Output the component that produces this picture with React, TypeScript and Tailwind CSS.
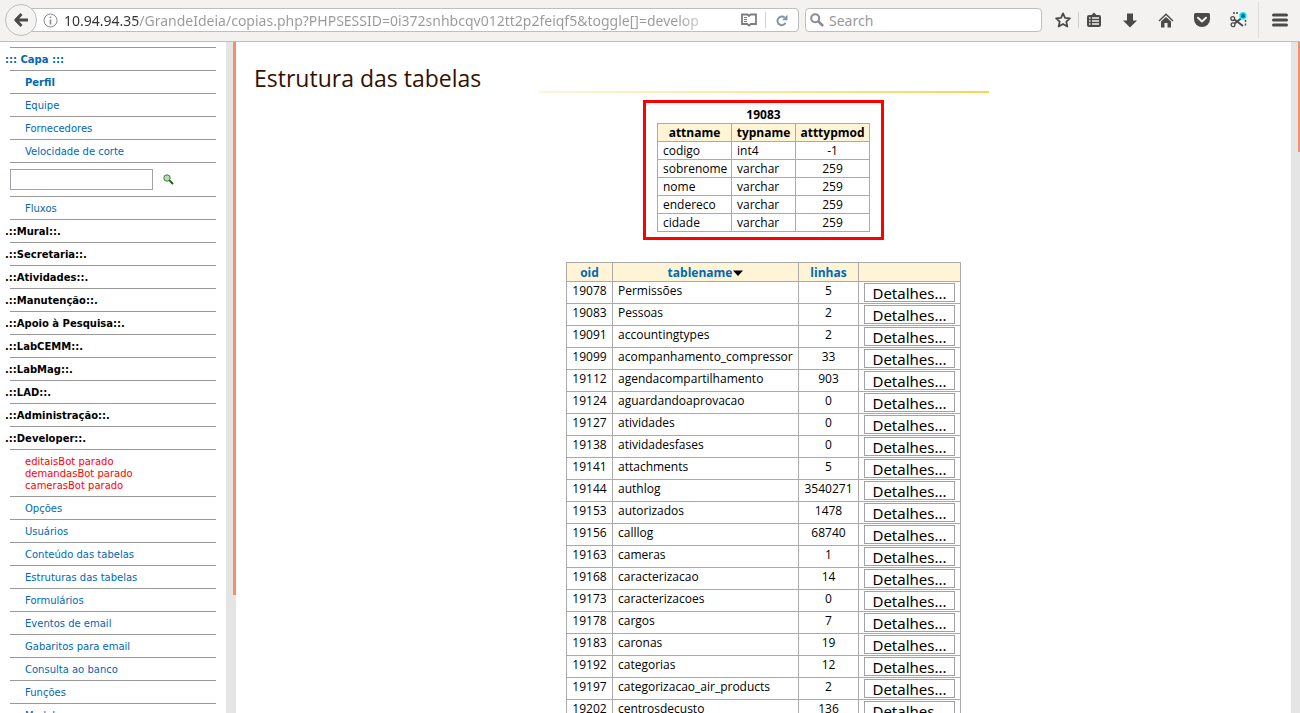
import React from "react";

const attributes = [
  ["codigo", "int4", "-1"],
  ["sobrenome", "varchar", "259"],
  ["nome", "varchar", "259"],
  ["endereco", "varchar", "259"],
  ["cidade", "varchar", "259"],
];

const tables: [string, string, string][] = [
  ["19078", "Permissões", "5"],
  ["19083", "Pessoas", "2"],
  ["19091", "accountingtypes", "2"],
  ["19099", "acompanhamento_compressor", "33"],
  ["19112", "agendacompartilhamento", "903"],
  ["19124", "aguardandoaprovacao", "0"],
  ["19127", "atividades", "0"],
  ["19138", "atividadesfases", "0"],
  ["19141", "attachments", "5"],
  ["19144", "authlog", "3540271"],
  ["19153", "autorizados", "1478"],
  ["19156", "calllog", "68740"],
  ["19163", "cameras", "1"],
  ["19168", "caracterizacao", "14"],
  ["19173", "caracterizacoes", "0"],
  ["19178", "cargos", "7"],
  ["19183", "caronas", "19"],
  ["19192", "categorias", "12"],
  ["19197", "categorizacao_air_products", "2"],
  ["19202", "centrosdecusto", "136"],
];

const sections = ["Mural", "Secretaria", "Atividades", "Manutenção", "Apoio à Pesquisa", "LabCEMM", "LabMag", "LAD", "Administração", "Developer"];
const developerLinks = ["Opções", "Usuários", "Conteúdo das tabelas", "Estruturas das tabelas", "Formulários", "Eventos de email", "Gabaritos para email", "Consulta ao banco", "Funções", "Modelos"];

function ToolbarButton({ label, children }: { label: string; children: React.ReactNode }) {
  return (
    <button type="button" aria-label={label} className="flex size-5 items-center justify-center">
      {children}
    </button>
  );
}

function BrowserBar() {
  return (
    <header className="flex h-[42px] shrink-0 items-center border-b border-[#bebebc] bg-[#f3f2f0] pb-px pl-[5px] pr-2.5 font-['Noto_Sans',sans-serif] text-[14px]">
      <button type="button" aria-label="Voltar" className="relative z-10 flex size-8 shrink-0 items-center justify-center rounded-full border border-[#bebebc] bg-[#f5f4f2]">
        <svg width="16" height="16" viewBox="0 0 16 16" fill="none" stroke="#4a4a4a" strokeWidth="3">
          <path d="M8.5 2L2.8 8L8.5 14M3 8H15" strokeLinejoin="round" />
        </svg>
      </button>
      <div className="-ml-2 flex h-6 min-w-0 flex-1 items-center rounded-r-sm border border-[#bebebc] bg-white pl-[13px]">
        <svg width="15" height="15" viewBox="0 0 15 15" fill="none" stroke="#8c8c8c" className="shrink-0">
          <circle cx="7.5" cy="7.5" r="6.5" />
          <path d="M7.5 6.5V11.5M7.5 3.5V5" strokeWidth="1.6" />
        </svg>
        <input
          aria-label="Endereço"
          defaultValue="10.94.94.35/GrandeIdeia/copias.php?PHPSESSID=0i372snhbcqv012tt2p2feiqf5&toggle[]=develop"
          className="ml-1.5 mr-[18px] h-5 min-w-0 flex-1 bg-[linear-gradient(to_right,#333_0_75px,#999_75px_calc(100%-44px),transparent)] bg-clip-text text-transparent outline-none"
        />
        <ToolbarButton label="Modo de leitura">
          <svg width="16" height="14" viewBox="0 0 16 14" fill="none" stroke="#7d7d7d">
            <path d="M1 1.5H6.5L8 3L9.5 1.5H15V11H9.8L8 12.6L6.2 11H1Z" strokeWidth="1.8" />
            <path d="M3 4.5H6M3 6.5H6M3 8.5H6" />
          </svg>
        </ToolbarButton>
        <span className="ml-1.5 mr-1.5 h-4 w-px bg-[#cfcfcf]" />
        <ToolbarButton label="Recarregar">
          <svg width="12" height="13" viewBox="0 0 12 13">
            <path d="M9.5 9A4.3 4.3 0 1 1 8.6 3.6" fill="none" stroke="#8494a6" strokeWidth="2" />
            <path d="M11.5 0.8V6.2H6Z" fill="#8494a6" />
          </svg>
        </ToolbarButton>
        <span className="w-1.5" />
      </div>
      <div className="ml-1.5 flex h-6 w-[237px] shrink items-center rounded-sm border border-[#bebebc] bg-white pl-1">
        <svg width="14" height="14" viewBox="0 0 14 14" fill="none" stroke="#8c8c8c">
          <circle cx="5.2" cy="5.2" r="4" strokeWidth="2" />
          <path d="M8.2 8.2L13 13" strokeWidth="2.6" />
        </svg>
        <input aria-label="Search" placeholder="Search" className="ml-[5px] h-5 min-w-0 flex-1 outline-none placeholder:text-[#999]" />
      </div>
      <div className="ml-[11px] flex shrink-0 items-center">
        <ToolbarButton label="Favoritar">
          <svg width="16" height="16" viewBox="0 0 16 16" fill="none" stroke="#4a4a4a" strokeWidth="1.8" strokeLinejoin="round">
            <path d="M8 1.4L10 5.8L14.9 6.3L11.3 9.6L12.3 14.5L8 12L3.7 14.5L4.7 9.6L1.1 6.3L6 5.8Z" />
          </svg>
        </ToolbarButton>
        <span className="mx-[5px] h-4 w-px bg-[#cfcfcf]" />
        <div className="flex items-center gap-4">
          <ToolbarButton label="Biblioteca">
            <svg width="14" height="16" viewBox="0 0 14 16">
              <path d="M2 3H4.5L7 0.5L9.5 3H12Q14 3 14 5V13Q14 15 12 15H2Q0 15 0 13V5Q0 3 2 3Z" fill="#4a4a4a" />
              <path d="M2 6H3.5M5 6H12M2 9H3.5M5 9H12M2 12H3.5M5 12H12" stroke="#f3f2f0" strokeWidth="1.6" />
            </svg>
          </ToolbarButton>
          <ToolbarButton label="Downloads">
            <svg width="14" height="15" viewBox="0 0 14 15"><path d="M4 0.5H10V7.5H14L7 14.5L0 7.5H4Z" fill="#4a4a4a" /></svg>
          </ToolbarButton>
          <ToolbarButton label="Início">
            <svg width="16" height="15" viewBox="0 0 16 15">
              <path d="M1 8L8 1.3L15 8" fill="none" stroke="#4a4a4a" strokeWidth="1.4" />
              <path d="M3 8.5L8 3.9L13 8.5V14.5H9.5V10H6.5V14.5H3Z" fill="#4a4a4a" />
            </svg>
          </ToolbarButton>
          <ToolbarButton label="Pocket">
            <svg width="16" height="14" viewBox="0 0 16 14">
              <path d="M1.5 0H14.5Q16 0 16 1.5V6A8 8 0 0 1 0 6V1.5Q0 0 1.5 0Z" fill="#4a4a4a" />
              <path d="M4 4.8L8 8.5L12 4.8" fill="none" stroke="#f3f2f0" strokeWidth="2" strokeLinecap="round" strokeLinejoin="round" />
            </svg>
          </ToolbarButton>
          <ToolbarButton label="Recortar">
            <svg width="17" height="16" viewBox="0 0 17 16" fill="none" stroke="#4a4a4a">
              <path d="M3 1H9" strokeWidth="1.4" strokeDasharray="2 1" />
              <path d="M15.5 8V15" strokeWidth="1.4" strokeDasharray="2 1.5" />
              <circle cx="2.7" cy="6.6" r="1.9" strokeWidth="1.3" />
              <circle cx="3" cy="12.8" r="1.9" strokeWidth="1.3" />
              <path d="M4.4 7.6L13 14M4.6 11.6L11 6.6" strokeWidth="1.9" />
              <circle cx="13" cy="3.8" r="3.7" fill="#00f0ff" stroke="none" />
              <path d="M13 1.6V6M11.1 2.7L14.9 4.9M14.9 2.7L11.1 4.9" stroke="#07556b" strokeWidth="1.2" />
            </svg>
          </ToolbarButton>
        </div>
        <span className="ml-[10px] mr-[11px] h-9 w-px bg-[#dcdbd9]" />
        <ToolbarButton label="Menu">
          <svg width="16" height="14" viewBox="0 0 16 14" stroke="#4a4a4a" strokeWidth="3" strokeLinecap="round">
            <path d="M1.5 2H14.5M1.5 7H14.5M1.5 12H14.5" />
          </svg>
        </ToolbarButton>
      </div>
    </header>
  );
}

function SideLink({ children, bold }: { children: React.ReactNode; bold?: boolean }) {
  return (
    <li className="border-t border-[#999] pb-1 pl-[15px] pt-[6px]">
      <a href="#" className={bold ? "block font-bold text-[#0068b5]" : "block text-[#0068b5]"}>{children}</a>
    </li>
  );
}

function Sidebar() {
  return (
    <nav className="w-[226px] shrink-0 overflow-hidden pl-2.5 pr-2.5 pt-[5px] font-['DejaVu_Sans',sans-serif] text-[10px] leading-3">
      <ul>
        <li className="border-t border-[#999] pb-1 pt-[6px]">
          <a href="#" className="-ml-[5px] block font-bold text-[#0068b5]">::: Capa :::</a>
        </li>
        <SideLink bold>Perfil</SideLink>
        <SideLink>Equipe</SideLink>
        <SideLink>Fornecedores</SideLink>
        <SideLink>Velocidade de corte</SideLink>
        <li className="flex items-center border-t border-[#999] pb-[5px] pt-[6px]">
          <input aria-label="Pesquisar" className="h-[21px] w-[143px] border border-[#a0a0b0] px-1 outline-none" />
          <button type="button" aria-label="Buscar" className="ml-2.5">
            <svg width="11" height="11" viewBox="0 0 11 11">
              <circle cx="4" cy="4" r="3.2" fill="#b9dcb5" stroke="#3f7d3c" />
              <path d="M6.4 6.4L10 10" stroke="#1c5e1a" strokeWidth="2" />
            </svg>
          </button>
        </li>
        <li className="mt-px border-t border-[#999] pb-1 pl-[15px] pt-[6px]">
          <a href="#" className="block text-[#0068b5]">Fluxos</a>
        </li>
        {sections.map((name) => (
          <li key={name} className="border-t border-[#999] pb-1 pt-[6px]">
            <a href="#" className="-ml-[5px] block font-bold text-black">.::{name}::.</a>
          </li>
        ))}
        <li className="border-t border-[#999] pb-1 pl-[15px] pt-[6px] text-[#f00]">
          <p>editaisBot parado</p>
          <p>demandasBot parado</p>
          <p>camerasBot parado</p>
        </li>
        {developerLinks.map((name) => (
          <SideLink key={name}>{name}</SideLink>
        ))}
      </ul>
    </nav>
  );
}

function DetailsPanel() {
  return (
    <section className="mt-[7px] border-[3px] border-[#f00] px-[11px] pb-[5px] pt-1">
      <table className="table-fixed border-collapse text-[12px] leading-4">
        <caption className="font-bold">19083</caption>
        <colgroup>
          <col className="w-[74px]" />
          <col className="w-16" />
          <col className="w-[74px]" />
        </colgroup>
        <thead>
          <tr className="h-[18px] bg-[#fff5d6]">
            <th className="border border-[#aaa] p-0">attname</th>
            <th className="border border-[#aaa] p-0">typname</th>
            <th className="border border-[#aaa] p-0">atttypmod</th>
          </tr>
        </thead>
        <tbody>
          {attributes.map(([name, type, mod]) => (
            <tr key={name} className="h-[18px]">
              <td className="border border-[#aaa] py-0 pl-[5px]">{name}</td>
              <td className="border border-[#aaa] py-0 pl-[5px]">{type}</td>
              <td className="border border-[#aaa] p-0 text-center">{mod}</td>
            </tr>
          ))}
        </tbody>
      </table>
    </section>
  );
}

function TableList() {
  return (
    <table className="mt-[22px] table-fixed border-collapse text-[12px] leading-4">
      <colgroup>
        <col className="w-[46px]" />
        <col className="w-[186px]" />
        <col className="w-[60px]" />
        <col className="w-[102px]" />
      </colgroup>
      <thead>
        <tr className="h-[19px] bg-[#fff5d6] text-[#0068b5]">
          <th className="border border-[#aaa] px-0 pb-0 pt-0.5"><a href="#">oid</a></th>
          <th className="border border-[#aaa] px-0 pb-0 pt-0.5">
            <a href="#" className="flex items-center justify-center">
              tablename
              <svg width="10" height="6" viewBox="0 0 10 6" className="ml-px"><path d="M0 0.5H10L5 6Z" fill="#000" /></svg>
            </a>
          </th>
          <th className="border border-[#aaa] px-0 pb-0 pt-0.5"><a href="#">linhas</a></th>
          <th className="border border-[#aaa] p-0" />
        </tr>
      </thead>
      <tbody>
        {tables.map(([oid, name, rows]) => (
          <tr key={oid} className="h-[22px] align-top">
            <td className="border border-[#aaa] px-0 pb-0 pt-px text-center">{oid}</td>
            <td className="border border-[#aaa] pb-0 pl-[5px] pr-0 pt-px">{name}</td>
            <td className="border border-[#aaa] px-0 pb-0 pt-px text-center">{rows}</td>
            <td className="border border-[#aaa] px-[5px] py-px">
              <button type="button" className="flex h-[19px] w-full items-center justify-center border border-[#a0a0b0] bg-white font-['Noto_Sans',sans-serif] text-[15px] leading-4">
                Detalhes...
              </button>
            </td>
          </tr>
        ))}
      </tbody>
    </table>
  );
}

export default function App() {
  return (
    <div className="flex h-screen flex-col overflow-hidden bg-white text-black">
      <BrowserBar />
      <div className="flex min-h-0 flex-1">
        <Sidebar />
        <div className="flex w-2.5 shrink-0 flex-col items-end bg-[#e5e5e5]">
          <div className="h-[82.4%] w-[3px] bg-[#f0906c]" />
        </div>
        <main className="flex min-w-0 flex-1 flex-col items-center overflow-hidden font-['Open_Sans',sans-serif]">
          <h1 className="mt-[18px] h-[31px] w-full pl-[18px] text-[23px] leading-9 text-[#331100]">Estrutura das tabelas</h1>
          <div className="h-0.5 w-[450px] shrink-0 bg-linear-to-r from-[#fff5d6] to-[#fdd34b]" />
          <DetailsPanel />
          <TableList />
        </main>
        <div className="flex w-[9px] shrink-0 flex-col items-end bg-[#e5e5e5]">
          <div className="h-[16.4%] w-0.5 bg-[#f0906c]" />
        </div>
      </div>
    </div>
  );
}
